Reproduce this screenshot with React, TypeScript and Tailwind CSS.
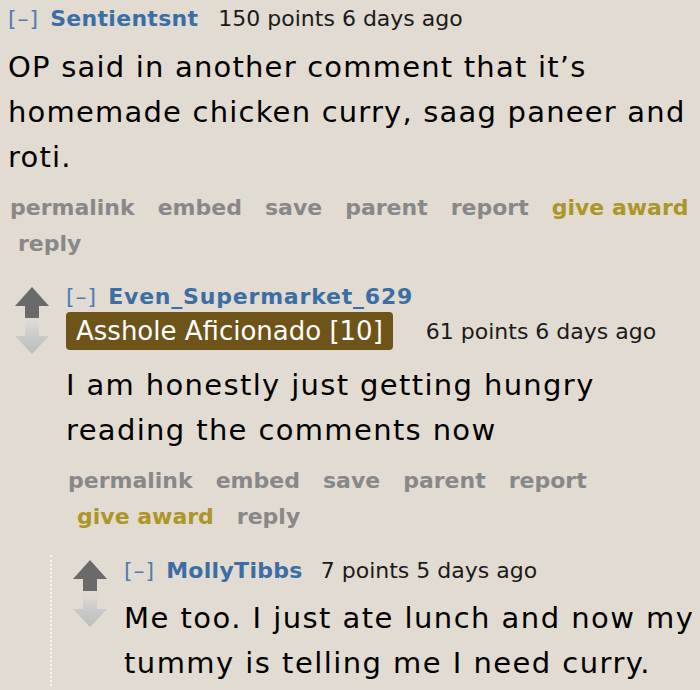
import React from "react";

const Up = () => (
  <svg width="34" height="31" viewBox="0 0 34 31" className="block">
    <polygon points="17,0 34,19 24,19 24,31 10,31 10,19 0,19" fill="#6a6a6a" />
  </svg>
);
const Down = () => (
  <svg width="34" height="32" viewBox="0 0 34 32" className="block">
    <defs>
      <linearGradient id="dg" x1="0" y1="0" x2="0" y2="1">
        <stop offset="0" stopColor="#dfdad2" />
        <stop offset="0.45" stopColor="#cacaca" />
        <stop offset="1" stopColor="#bdbdbd" />
      </linearGradient>
    </defs>
    <polygon points="10,0 24,0 24,14 34,14 17,32 0,14 10,14" fill="url(#dg)" />
  </svg>
);

const Votes = () => (
  <div className="flex flex-col items-center w-[34px] pt-[3px] gap-[4px] shrink-0">
    <Up />
    <Down />
  </div>
);

const Actions = ({ wrapAward }: { wrapAward?: boolean }) => (
  <div className="font-['DejaVu_Sans',sans-serif] font-bold text-[22px] leading-[36px] text-[#888888] whitespace-nowrap">
    {wrapAward ? (
      <>
        <div className="flex gap-[23px]">
          <span>permalink</span>
          <span>embed</span>
          <span>save</span>
          <span>parent</span>
          <span>report</span>
        </div>
        <div className="flex gap-[23px] pl-[9px]">
          <span className="text-[#ad9527]">give award</span>
          <span>reply</span>
        </div>
      </>
    ) : (
      <>
        <div className="flex gap-[23px]">
          <span>permalink</span>
          <span>embed</span>
          <span>save</span>
          <span>parent</span>
          <span>report</span>
          <span className="text-[#ad9527]">give award</span>
        </div>
        <div className="flex gap-[23px] pl-[8px]">
          <span>reply</span>
        </div>
      </>
    )}
  </div>
);

export default function App() {
  return (
    <div className="w-[700px] h-[690px] overflow-hidden bg-[#e2dbd1] font-['DejaVu_Sans',sans-serif] text-black">
      {/* Comment 1 */}
      <div className="pl-[8px] pt-[5px]">
        <div className="flex items-baseline text-[22px] leading-[28px] whitespace-nowrap">
          <span className="text-[#4f7db3] tracking-[1px]">[–]</span>
          <span className="ml-[11px] font-bold text-[#3a6ea5] tracking-[0.3px]">Sentientsnt</span>
          <span className="ml-[20px] text-[#1a1a1a]">150 points 6 days ago</span>
        </div>
        <div className="mt-[12px] text-[29px] leading-[45px] tracking-[1.2px] whitespace-nowrap">
          OP said in another comment that it’s
          <br />
          homemade chicken curry, saag paneer and
          <br />
          roti.
        </div>
        <div className="mt-[10px] pl-[2px]">
          <Actions />
        </div>
      </div>

      {/* Comment 2 */}
      <div className="flex mt-[22px] pl-[15px]">
        <Votes />
        <div className="ml-[17px]">
          <div className="text-[22px] leading-[26px] flex items-baseline whitespace-nowrap">
            <span className="text-[#4f7db3] tracking-[1px]">[–]</span>
            <span className="ml-[11px] font-bold text-[#3a6ea5] tracking-[0.8px]">Even_Supermarket_629</span>
          </div>
          <div className="flex items-center mt-[2px] whitespace-nowrap">
            <span className="bg-[#6e5419] text-white text-[26px] leading-[38px] px-[10px] rounded-[4px]">
              Asshole Aficionado [10]
            </span>
            <span className="ml-[33px] text-[22px] text-[#1a1a1a]">61 points 6 days ago</span>
          </div>
          <div className="mt-[13px] text-[29px] leading-[45px] tracking-[1.35px] whitespace-nowrap">
            I am honestly just getting hungry
            <br />
            reading the comments now
          </div>
          <div className="mt-[10px] pl-[2px]">
            <Actions wrapAward />
          </div>

          {/* Comment 3 */}
          <div className="mt-[20px] -ml-[16px] border-l-2 border-dotted border-[#f7f7fa] flex pl-[21px] pt-[2px]">
            <Votes />
            <div className="ml-[17px]">
              <div className="text-[22px] leading-[28px] flex items-baseline whitespace-nowrap">
                <span className="text-[#4f7db3] tracking-[1px]">[–]</span>
                <span className="ml-[11px] font-bold text-[#3a6ea5] tracking-[0.3px]">MollyTibbs</span>
                <span className="ml-[18px] text-[#1a1a1a]">7 points 5 days ago</span>
              </div>
              <div className="mt-[11px] text-[29px] leading-[45px] tracking-[1.45px] whitespace-nowrap">
                Me too. I just ate lunch and now my
                <br />
                tummy is telling me I need curry.
              </div>
            </div>
          </div>
        </div>
      </div>
    </div>
  );
}
